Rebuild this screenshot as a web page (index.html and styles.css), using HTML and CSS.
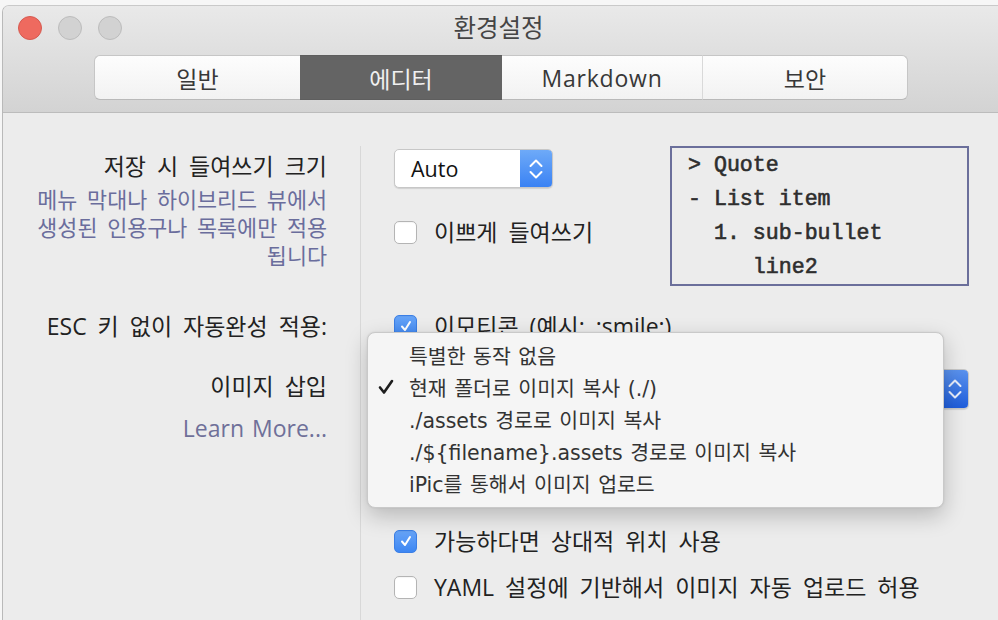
FILE: index.html
```html
<!DOCTYPE html>
<html lang="ko">
<head>
<meta charset="utf-8">
<title>환경설정</title>
<link rel="stylesheet" href="styles.css">
</head>
<body>
<div class="window">
  <header class="toolbar">
    <div class="titlerow">
      <div class="lights">
        <span class="light close"></span>
        <span class="light"></span>
        <span class="light"></span>
      </div>
      <div class="title">환경설정</div>
      <div></div>
    </div>
    <nav class="tabs">
      <div class="tab tab-general">일반</div>
      <div class="tab tab-editor active">에디터</div>
      <div class="tab tab-markdown">Markdown</div>
      <div class="tab tab-security">보안</div>
    </nav>
  </header>

  <main class="content">
    <div class="label-cell row1">
      <div class="label">저장 시 들여쓰기 크기</div>
      <div class="hint">메뉴 막대나 하이브리드 뷰에서<br>생성된 인용구나 목록에만 적용<br>됩니다</div>
    </div>
    <div class="control-cell row1">
      <div class="stack">
        <div class="select select-auto">
          <span class="select-value">Auto</span>
          <span class="stepper">
            <svg width="14" height="22" viewBox="0 0 14 22"><path d="M1.5 8 L7 2.5 L12.5 8 M1.5 14 L7 19.5 L12.5 14" fill="none" stroke="#fff" stroke-width="2" stroke-linecap="round" stroke-linejoin="round"/></svg>
          </span>
        </div>
        <div class="check pretty"><span class="box"></span><span>이쁘게 들여쓰기</span></div>
      </div>
      <pre class="quote">&gt; Quote
- List item
  1. sub-bullet
     line2</pre>
    </div>

    <div class="label-cell row2">
      <div class="label">ESC 키 없이 자동완성 적용:</div>
    </div>
    <div class="control-cell row2">
      <div class="check"><span class="box checked"><svg width="14" height="14" viewBox="0 0 14 14"><path d="M3 7.5 L6 11 L11 3" fill="none" stroke="#fff" stroke-width="2" stroke-linecap="round" stroke-linejoin="round"/></svg></span><span>이모티콘 (예시: :smile:)</span></div>
    </div>

    <div class="label-cell row3">
      <div class="label">이미지 삽입</div>
      <div class="learn">Learn More...</div>
    </div>
    <div class="control-cell row3">
      <div class="select select-image">
        <span class="select-value"></span>
        <span class="stepper dark">
          <svg width="14" height="22" viewBox="0 0 14 22"><path d="M1.5 8 L7 2.5 L12.5 8 M1.5 14 L7 19.5 L12.5 14" fill="none" stroke="#e8eefc" stroke-width="2" stroke-linecap="round" stroke-linejoin="round"/></svg>
        </span>
      </div>
      <div class="check relative"><span class="box checked"><svg width="14" height="14" viewBox="0 0 14 14"><path d="M3 7.5 L6 11 L11 3" fill="none" stroke="#fff" stroke-width="2" stroke-linecap="round" stroke-linejoin="round"/></svg></span><span>가능하다면 상대적 위치 사용</span></div>
      <div class="check yaml"><span class="box"></span><span>YAML 설정에 기반해서 이미지 자동 업로드 허용</span></div>
    </div>
  </main>

  <div class="menu">
    <div class="menu-item"><span class="mark"></span><span>특별한 동작 없음</span></div>
    <div class="menu-item"><span class="mark"><svg width="16" height="16" viewBox="0 0 16 16"><path d="M2 8.5 L6 13.5 L14 2" fill="none" stroke="#1e1e1e" stroke-width="2.6" stroke-linecap="round" stroke-linejoin="round"/></svg></span><span>현재 폴더로 이미지 복사 (./)</span></div>
    <div class="menu-item"><span class="mark"></span><span>./assets 경로로 이미지 복사</span></div>
    <div class="menu-item"><span class="mark"></span><span>./${filename}.assets 경로로 이미지 복사</span></div>
    <div class="menu-item"><span class="mark"></span><span>iPic를 통해서 이미지 업로드</span></div>
  </div>
</div>
</body>
</html>
```

FILE: styles.css
```css
* { box-sizing: border-box; }

html, body {
  margin: 0;
  height: 100%;
}

body {
  background: #f6f6f6;
  font-family: "Open Sans", "Noto Sans CJK KR", sans-serif;
  font-size: 23px;
  word-spacing: 5px;
  color: #222;
  overflow: hidden;
}

.window {
  position: relative;
  margin: 5px 0 0 2px;
  height: 615px;
  border-left: 1px solid #b9b9b9;
  border-top: 1px solid #c9c9c9;
  border-top-left-radius: 7px;
  background: #ececec;
  overflow: hidden;
  display: flex;
  flex-direction: column;
}

/* ---------- toolbar ---------- */
.toolbar {
  height: 107px;
  flex: none;
  background: linear-gradient(#e9e9e9, #d3d3d3);
  border-bottom: 1px solid #bcbcbc;
}

.titlerow {
  height: 49px;
  display: grid;
  grid-template-columns: 1fr auto 1fr;
  align-items: start;
}

.lights {
  display: flex;
  gap: 16px;
  padding: 10px 0 0 15px;
}

.light {
  width: 24px;
  height: 24px;
  border-radius: 50%;
  background: #d2d2d2;
  border: 1px solid #bcbcbc;
}

.light.close {
  background: #ee6a5f;
  border-color: #d65a50;
}

.title {
  line-height: 44px;
  color: #454545;
  font-size: 24.5px;
  margin-left: -4px;
}

.tabs {
  display: flex;
  margin-left: 91px;
  height: 45px;
}

.tab {
  display: flex;
  align-items: center;
  justify-content: center;
  background: linear-gradient(#fdfdfd, #f2f2f2);
  border-top: 1px solid #c6c6c6;
  border-bottom: 1px solid #b9b9b9;
  color: #383838;
  font-size: 23px;
}

.tab-general {
  width: 206px;
  border-left: 1px solid #c6c6c6;
  border-radius: 6px 0 0 6px;
}

.tab-editor { width: 202px; }

.tab-markdown {
  width: 201px;
  border-right: 1px solid #d9d9d9;
  letter-spacing: 0.8px;
}

.tab-security {
  width: 205px;
  border-right: 1px solid #c6c6c6;
  border-radius: 0 6px 6px 0;
}

.tab.active {
  background: #646464;
  border-color: #5e5e5e;
  color: #f0f0f0;
}

/* ---------- content ---------- */
.content {
  flex: 1;
  padding-top: 33px;
  display: grid;
  grid-template-columns: 358px 1fr;
  grid-template-rows: auto auto 1fr;
}

.label-cell {
  border-right: 1px solid #d8d8d8;
  padding-right: 33px;
  text-align: right;
}

.control-cell {
  padding-left: 33px;
  padding-right: 29px;
}

.label {
  line-height: 34px;
  color: #222;
}

.hint {
  margin-top: 3px;
  line-height: 28px;
  font-size: 21.8px;
  word-spacing: 4px;
  color: #6a6d9c;
}

.learn {
  margin-top: 8px;
  line-height: 34px;
  word-spacing: 2px;
  color: #6f7099;
}

.label-cell.row1 { padding-top: 3px; }

.control-cell.row1 {
  display: flex;
  justify-content: space-between;
  align-items: flex-start;
}

.label-cell.row2,
.control-cell.row2 { padding-top: 23px; }

.label-cell.row3,
.control-cell.row3 { padding-top: 26px; }

.stack {
  padding-top: 3px;
}

/* select */
.select {
  display: flex;
  align-items: stretch;
  height: 39px;
  background: #fff;
  border: 1px solid #c7c7c7;
  border-radius: 5px;
  box-shadow: 0 1px 1px rgba(0,0,0,0.12);
  overflow: hidden;
}

.select-auto { width: 159px; }

.select-image { height: 40px; }

.select-value {
  flex: 1;
  display: flex;
  align-items: center;
  padding-left: 16px;
  font-size: 21.5px;
  color: #111;
}

.stepper {
  width: 32px;
  display: flex;
  align-items: center;
  justify-content: center;
  background: linear-gradient(#6eaaf8, #3a82f4);
}

.stepper.dark {
  width: 26px;
  background: linear-gradient(#5a92ee, #1f5ddb);
}

/* checkbox */
.check {
  display: flex;
  align-items: center;
  gap: 17px;
  line-height: 34px;
  white-space: nowrap;
}

.check.pretty { margin-top: 27px; }

.check.relative { margin-top: 115px; }

.check.yaml { margin-top: 12px; }

.box {
  flex: none;
  width: 23px;
  height: 23px;
  border-radius: 5px;
  background: #fff;
  border: 1px solid #b4b4b4;
  box-shadow: inset 0 1px 1px rgba(0,0,0,0.04);
  display: flex;
  align-items: center;
  justify-content: center;
}

.box.checked {
  background: linear-gradient(#68a5f8, #3d86f2);
  border-color: #3b7fe6;
}

/* quote preview */
.quote {
  margin: 0;
  width: 299px;
  border: 2px solid #6b6f9b;
  padding: 0 0 0 16px;
  font-family: "Liberation Mono", "Courier New", monospace;
  font-weight: normal;
  -webkit-text-stroke: 0.6px #2e2e2e;
  font-size: 21.6px;
  word-spacing: 0;
  line-height: 34px;
  color: #2e2e2e;
}

/* popup menu */
.menu {
  position: absolute;
  left: 364px;
  top: 326px;
  width: 577px;
  height: 176px;
  padding-top: 6px;
  background: #f5f5f5;
  border: 1px solid #c9c9c9;
  border-radius: 8px;
  box-shadow: 0 8px 22px rgba(0,0,0,0.22), 0 0 2px rgba(0,0,0,0.1);
  font-family: "DejaVu Sans", "Noto Sans CJK KR", sans-serif;
  font-size: 20.5px;
  word-spacing: 1px;
  color: #333;
}

.menu-item {
  display: grid;
  grid-template-columns: 41px 1fr;
  align-items: center;
  height: 32px;
}

.mark {
  padding-left: 10px;
  display: flex;
  align-items: center;
}
```
